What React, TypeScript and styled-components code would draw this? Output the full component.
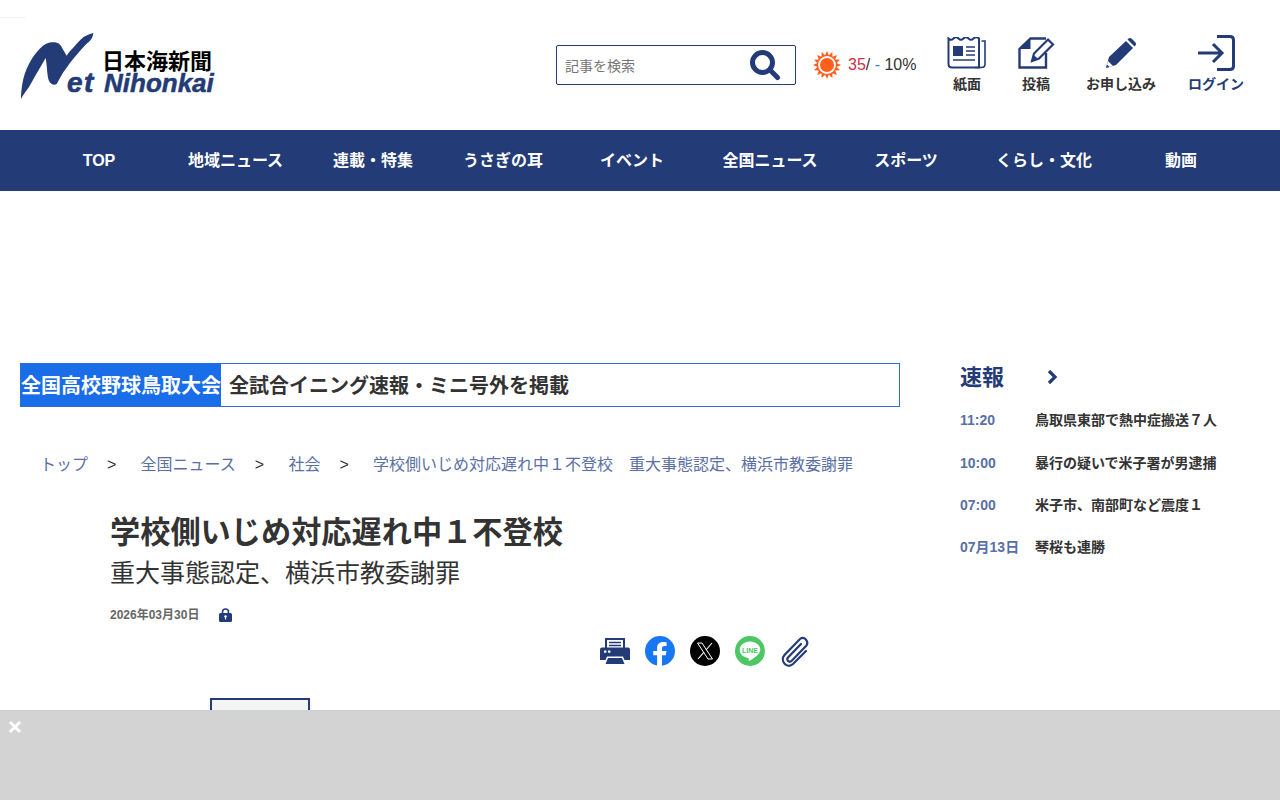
import React from 'react';
import styled, { createGlobalStyle } from 'styled-components';

const NAVY = '#233b77';
const LINK = '#5a6fa5';

const GlobalStyle = createGlobalStyle`
  html, body {
    margin: 0;
    padding: 0;
    background: #fff;
    color: #333;
    font-family: "Liberation Sans", "Noto Sans CJK JP", sans-serif;
  }
  * { box-sizing: border-box; }
`;

const Page = styled.div`
  width: 1280px;
  height: 800px;
  overflow: hidden;
  position: relative;
`;

const Header = styled.header`
  height: 130px;
  display: flex;
  align-items: center;
  padding: 0 0 0 20px;
`;

const Logo = styled.a`
  width: 196px;
  height: 68px;
  flex: none;
  margin-top: 4px;
  display: block;
  svg { display: block; }
`;

const HeaderRight = styled.div`
  margin-left: 340px;
  display: flex;
  align-items: center;
`;

const Search = styled.div`
  width: 240px;
  height: 40px;
  border: 1px solid ${NAVY};
  border-radius: 2px;
  display: flex;
  align-items: center;
  justify-content: space-between;
  padding: 0 14px 0 8px;
  font-size: 14px;
  color: #757575;
`;

const Weather = styled.div`
  display: flex;
  align-items: center;
  margin-left: 17px;
  font-size: 16px;
  line-height: 20px;
  width: 118px;
  svg { flex: none; display: block; }
`;

const WeatherText = styled.span`
  margin-left: 7px;
  color: #333;
  white-space: nowrap;
`;

const High = styled.span`
  color: #c9304a;
`;

const Dash = styled.span`
  color: #2a86c8;
`;

const Tools = styled.div`
  display: flex;
  margin-top: -2px;
  margin-left: 16px;
`;

const Tool = styled.a<{ $w: number; $accent?: boolean }>`
  width: ${(p) => p.$w}px;
  height: 58px;
  display: flex;
  flex-direction: column;
  align-items: center;
  justify-content: space-between;
  font-size: 14px;
  line-height: 18px;
  font-weight: bold;
  white-space: nowrap;
  color: ${(p) => (p.$accent ? NAVY : '#333')};
`;

const ToolIcon = styled.span`
  height: 36px;
  display: flex;
  align-items: center;
  svg { display: block; }
`;

const Nav = styled.nav`
  height: 61px;
  background: ${NAVY};
  padding-left: 30px;
  display: grid;
  grid-template-columns: 138px 135px 140px 120px 138px 138px 134px 142px 132px;
`;

const NavItem = styled.a`
  display: flex;
  align-items: center;
  justify-content: center;
  color: #fff;
  font-size: 16px;
  line-height: 20px;
  font-weight: bold;
`;

const Body = styled.div`
  display: flex;
  padding: 172px 0 0 20px;
`;

const Main = styled.main`
  width: 880px;
  flex: none;
`;

const Banner = styled.div`
  height: 44px;
  border: 1px solid #2b6fd4;
  display: flex;
  align-items: center;
  font-size: 20px;
  line-height: 24px;
  font-weight: bold;
  color: #333;
`;

const BannerLabel = styled.span`
  width: 200px;
  height: 100%;
  margin-right: 8px;
  padding-top: 2px;
  background: #1a6de8;
  color: #fff;
  display: flex;
  align-items: center;
  white-space: nowrap;
`;

const BannerText = styled.span`
  padding-top: 2px;
`;

const Crumbs = styled.ol`
  list-style: none;
  margin: 48px 0 0;
  padding: 0 0 0 20px;
  display: flex;
  font-size: 16px;
  line-height: 20px;
  color: ${LINK};
  white-space: nowrap;
`;

const CrumbSep = styled.li`
  color: #333;
  width: 52.6px;
  padding-left: 19px;
`;

const Article = styled.article`
  padding: 0 90px;
  margin-top: 38px;
`;

const Title = styled.h1`
  margin: 0;
  font-size: 30.2px;
  line-height: 40px;
  font-weight: bold;
  color: #333;
  white-space: nowrap;
`;

const SubTitle = styled.h2`
  margin: 5px 0 0;
  font-size: 25px;
  line-height: 30px;
  font-weight: normal;
  color: #333;
`;

const Meta = styled.div`
  margin-top: 19px;
  display: flex;
  align-items: center;
  gap: 20px;
  font-size: 12px;
  line-height: 16px;
  font-weight: bold;
  color: #666;
  svg { display: block; }
`;

const Share = styled.div`
  margin: 13px 0 0 490px;
  display: flex;
  gap: 15px;
  height: 30px;
  svg { display: block; }
`;

const Photo = styled.div`
  width: 100px;
  height: 120px;
  margin: 32px 0 0 100px;
  border: 2px solid ${NAVY};
  background: #f3f5f5;
`;

const Side = styled.aside`
  margin-left: 60px;
  width: 280px;
`;

const SideHead = styled.div`
  display: flex;
  align-items: center;
  height: 28px;
  font-size: 22px;
  line-height: 28px;
  font-weight: bold;
  color: ${NAVY};
  svg { display: block; margin-left: 43px; }
`;

const SideTitle = styled.span`
  padding-top: 2px;
`;

const NewsList = styled.ul`
  list-style: none;
  margin: 19.2px 0 0;
  padding: 0;
`;

const NewsRow = styled.li`
  display: flex;
  height: 42.4px;
  font-size: 14px;
  line-height: 20px;
  font-weight: bold;
  color: #333;
  white-space: nowrap;
`;

const NewsTime = styled.span`
  width: 75px;
  flex: none;
  color: ${LINK};
`;

const BottomAd = styled.div`
  position: fixed;
  left: 0;
  right: 0;
  bottom: 0;
  height: 90px;
  background: #d3d3d3;
`;

const AdClose = styled.span`
  position: absolute;
  left: 8px;
  top: 10px;
  svg { display: block; }
`;

const TopLine = styled.div`
  position: absolute;
  left: 0;
  top: 17px;
  width: 26px;
  height: 1px;
  background: #f4f4f4;
`;

const navItems = ['TOP', '地域ニュース', '連載・特集', 'うさぎの耳', 'イベント', '全国ニュース', 'スポーツ', 'くらし・文化', '動画'];

const news = [
  ['11:20', '鳥取県東部で熱中症搬送７人'],
  ['10:00', '暴行の疑いで米子署が男逮捕'],
  ['07:00', '米子市、南部町など震度１'],
  ['07月13日', '琴桜も連勝'],
];

const crumbs = ['トップ', '全国ニュース', '社会', '学校側いじめ対応遅れ中１不登校　重大事態認定、横浜市教委謝罪'];

const sunRays = Array.from({ length: 16 }, (_, i) => (i * 360) / 16);

const LogoMark = () => (
  <svg width="196" height="68" viewBox="0 0 196 68">
    <path
      fill={NAVY}
      d="M1 66 C1 58 2 52 3.3 46 C5 39 8 32 11.7 26 C15 21 19 16 23 12.7 C26 10.5 29 9.3 31.7 9.3 C35 9 37 9.5 38.3 10.3 C40.5 12 42 14 42.7 16 L46.7 22.7 C49 19 52 16 55 12.7 C58 9.5 60 7 63.3 4.3 C66 2.5 70 1 73.3 0 C73 3 72 5.5 70 7.7 C67 10.5 64 13 61.7 16 C58 20 55 24 51.7 27.7 C48.5 32 46 35.5 43.3 39.3 C41 43 39 47 36.7 51 C35 52 33 52 31.7 51 C30 50 29 48 28.3 46 C27.5 42 27 37 26.7 32.7 C26.3 29 26 26.5 25.5 25 C24 28 21.5 32 19 36.5 C15 43 12 49 9 54 C6 58 3 62 1 66 Z"
    />
    <text x="82" y="36" fontFamily="'Noto Sans CJK JP', sans-serif" fontSize="22" fontWeight="700" fill="#000">
      日本海新聞
    </text>
    <text x="47" y="58.5" fontFamily="'Liberation Sans', sans-serif" fontSize="28" fontWeight="700" fontStyle="italic" letterSpacing="1.5" fill={NAVY} stroke={NAVY} strokeWidth="0.6">
      et
    </text>
    <text x="84" y="59" fontFamily="'Liberation Sans', sans-serif" fontSize="26" fontWeight="700" fontStyle="italic" fill={NAVY} stroke={NAVY} strokeWidth="0.5">
      Nihonkai
    </text>
  </svg>
);

const SearchIcon = () => (
  <svg width="32" height="32" viewBox="0 0 32 32">
    <circle cx="13.5" cy="13.5" r="10" fill="none" stroke={NAVY} strokeWidth="5" />
    <path d="M21 21 L28.5 28.5" stroke={NAVY} strokeWidth="5" strokeLinecap="round" />
  </svg>
);

const SunIcon = () => (
  <svg width="28" height="28" viewBox="0 0 28 28">
    {sunRays.map((r) => (
      <path key={r} d="M14 0 L16.2 5 L11.8 5 Z" fill="#ff5f1f" transform={`rotate(${r} 14 14)`} />
    ))}
    <circle cx="14" cy="14" r="9.5" fill="#fff" stroke="#ff5f1f" strokeWidth="1.2" />
    <circle cx="14" cy="14" r="7" fill="#ff5f1f" />
  </svg>
);

const PaperIcon = () => (
  <svg width="40" height="32" viewBox="0 0 40 32" fill="none" stroke={NAVY}>
    <path d="M1.5 1.5 Q4 4 6.5 1.5 T11.5 1.5 T16.5 1.5 T21.5 1.5 T26.5 1.5 T32 1.5 V30.5 H5 Q1.5 30.5 1.5 27 Z" strokeWidth="2" />
    <path d="M34.5 4 H38 V27 Q38 30.5 34.5 30.5 H28" strokeWidth="1.6" />
    <rect x="6" y="9" width="10" height="10" fill={NAVY} stroke="none" />
    <path d="M19 10 H28 M19 14 H28 M19 18 H28 M6 23 H28" strokeWidth="1.5" />
  </svg>
);

const PostIcon = () => (
  <svg width="37" height="32" viewBox="0 0 37 32" fill="none">
    <path d="M28 16 V30.5 H1.5 V12 L12.5 1.5 H28" stroke={NAVY} strokeWidth="2.4" />
    <path d="M1.5 12 H12.5 V1.5 Z" fill={NAVY} />
    <path d="M14 24 L16 16.5 L30 2.5 L35 7.5 L21 21.5 Z" fill="#fff" stroke={NAVY} strokeWidth="2.2" />
    <path d="M14 24 L16.5 18.5 L19.5 21.5 Z" fill={NAVY} />
  </svg>
);

const PenIcon = () => (
  <svg width="32" height="32" viewBox="0 0 32 32">
    <path d="M1 31 L4 20 L21 4 L28 11 L11 28 Z" fill={NAVY} />
    <path d="M1 31 L3 24 L8 29 Z" fill="#fff" />
    <path d="M1 31 L2 27.5 L4.5 30 Z" fill={NAVY} />
    <path d="M23 2 Q25 0 27 2 L30 5 Q32 7 30 9 L29.5 9.5 L22.5 2.5 Z" fill={NAVY} />
  </svg>
);

const LoginIcon = () => (
  <svg width="38" height="36" viewBox="0 0 38 36" fill="none" stroke={NAVY} strokeWidth="3">
    <path d="M20 1.5 H33 Q36.5 1.5 36.5 5 V31 Q36.5 34.5 33 34.5 H20" />
    <path d="M1 18 H25 M16 9 L25 18 L16 27" />
  </svg>
);

const LockIcon = () => (
  <svg width="13" height="14" viewBox="0 0 13 14">
    <path d="M3.5 6 V4 A3 3 0 0 1 9.5 4 V6" fill="none" stroke={NAVY} strokeWidth="1.6" />
    <rect x="0" y="5" width="13" height="9" rx="1.5" fill={NAVY} />
    <circle cx="6.5" cy="8.5" r="1.2" fill="#fff" />
    <rect x="6" y="8.5" width="1" height="3" fill="#fff" />
  </svg>
);

const PrintIcon = () => (
  <svg width="30" height="30" viewBox="0 0 30 30">
    <path d="M6 13 V3 H24 V13" fill="#fff" stroke={NAVY} strokeWidth="2" />
    <path d="M9 6.5 H21 M9 9.5 H21" stroke={NAVY} strokeWidth="1.5" />
    <path d="M2 11.5 H28 Q30 11.5 30 13.5 V24 H24.5 L23 20.5 H7 L5.5 24 H0 V13.5 Q0 11.5 2 11.5 Z" fill={NAVY} />
    <path d="M8 22 H22 L24.5 28 H5.5 Z" fill={NAVY} />
    <rect x="4" y="14.5" width="2.4" height="2.2" fill="#fff" />
    <rect x="8" y="14.5" width="2.4" height="2.2" fill="#fff" />
  </svg>
);

const FacebookIcon = () => (
  <svg width="30" height="30" viewBox="0 0 30 30">
    <circle cx="15" cy="15" r="15" fill="#1877f2" />
    <path
      fill="#fff"
      d="M20.8 19.3 L21.5 15 H17 V12.2 C17 11 17.6 9.9 19.5 9.9 H21.6 V6.2 C21.6 6.2 19.7 5.9 17.9 5.9 C14.2 5.9 12.1 8.1 12.1 11.7 V15 H8.2 V19.3 H12.1 V30 H17 V19.3 Z"
    />
  </svg>
);

const XIcon = () => (
  <svg width="30" height="30" viewBox="0 0 30 30">
    <circle cx="15" cy="15" r="15" fill="#000" />
    <path d="M7.5 7 H12 L22.5 23 H18 Z" fill="none" stroke="#fff" strokeWidth="1" />
    <path d="M22 7 L16 14 M14 16.2 L8 23" stroke="#fff" strokeWidth="1.1" />
  </svg>
);

const LineIcon = () => (
  <svg width="30" height="30" viewBox="0 0 30 30">
    <circle cx="15" cy="15" r="15" fill="#4cc764" />
    <path d="M15 5.5 C9.2 5.5 4.7 9.2 4.7 13.8 C4.7 18 8.3 21.4 13.2 22 C14 22.2 13.6 23.6 13.6 24.4 C13.6 25 14.2 25 15 24.5 C18 22.8 25.3 18.6 25.3 13.8 C25.3 9.2 20.8 5.5 15 5.5 Z" fill="#fff" />
    <text x="15" y="16.5" textAnchor="middle" fontFamily="'Liberation Sans', sans-serif" fontSize="7" fontWeight="700" fill="#4cc764">
      LINE
    </text>
  </svg>
);

const ClipIcon = () => (
  <svg width="30" height="32" viewBox="0 0 30 32" fill="none" stroke={NAVY} strokeWidth="2.2" strokeLinecap="round">
    <path d="M21 8 L8 21.5 C6 24 9 27 11.5 25 L26 10 C29.5 6 24.5 -0.5 20 3 L4.5 19 C-0.5 25 7 33.5 13 28 L26 15" />
  </svg>
);

const CloseIcon = () => (
  <svg width="14" height="14" viewBox="0 0 14 14">
    <path d="M2 2 L12 12 M12 2 L2 12" stroke="#fff" strokeWidth="3" />
  </svg>
);

const ChevronIcon = () => (
  <svg width="11" height="16" viewBox="0 0 11 16" fill="none">
    <path d="M2 2 L8 8 L2 14" stroke={NAVY} strokeWidth="3.2" />
  </svg>
);

export default function App() {
  return (
    <Page>
      <GlobalStyle />
      <TopLine />
      <Header>
        <Logo>
          <LogoMark />
        </Logo>
        <HeaderRight>
          <Search>
            記事を検索
            <SearchIcon />
          </Search>
          <Weather>
            <SunIcon />
            <WeatherText>
              <High>35</High>/ <Dash>-</Dash> 10%
            </WeatherText>
          </Weather>
          <Tools>
            <Tool $w={40}>
              <ToolIcon>
                <PaperIcon />
              </ToolIcon>
              紙面
            </Tool>
            <Tool $w={98}>
              <ToolIcon>
                <PostIcon />
              </ToolIcon>
              投稿
            </Tool>
            <Tool $w={72}>
              <ToolIcon>
                <PenIcon />
              </ToolIcon>
              お申し込み
            </Tool>
            <Tool $w={118} $accent>
              <ToolIcon>
                <LoginIcon />
              </ToolIcon>
              ログイン
            </Tool>
          </Tools>
        </HeaderRight>
      </Header>
      <Nav>
        {navItems.map((n) => (
          <NavItem key={n}>{n}</NavItem>
        ))}
      </Nav>
      <Body>
        <Main>
          <Banner>
            <BannerLabel>全国高校野球鳥取大会</BannerLabel>
            <BannerText>全試合イニング速報・ミニ号外を掲載</BannerText>
          </Banner>
          <Crumbs>
            {crumbs.map((c, i) => (
              <React.Fragment key={c}>
                {i > 0 && <CrumbSep>&gt;</CrumbSep>}
                <li>{c}</li>
              </React.Fragment>
            ))}
          </Crumbs>
          <Article>
            <Title>学校側いじめ対応遅れ中１不登校</Title>
            <SubTitle>重大事態認定、横浜市教委謝罪</SubTitle>
            <Meta>
              2026年03月30日
              <LockIcon />
            </Meta>
            <Share>
              <PrintIcon />
              <FacebookIcon />
              <XIcon />
              <LineIcon />
              <ClipIcon />
            </Share>
            <Photo />
          </Article>
        </Main>
        <Side>
          <SideHead>
            <SideTitle>速報</SideTitle>
            <ChevronIcon />
          </SideHead>
          <NewsList>
            {news.map(([t, s]) => (
              <NewsRow key={t}>
                <NewsTime>{t}</NewsTime>
                {s}
              </NewsRow>
            ))}
          </NewsList>
        </Side>
      </Body>
      <BottomAd>
        <AdClose>
          <CloseIcon />
        </AdClose>
      </BottomAd>
    </Page>
  );
}
